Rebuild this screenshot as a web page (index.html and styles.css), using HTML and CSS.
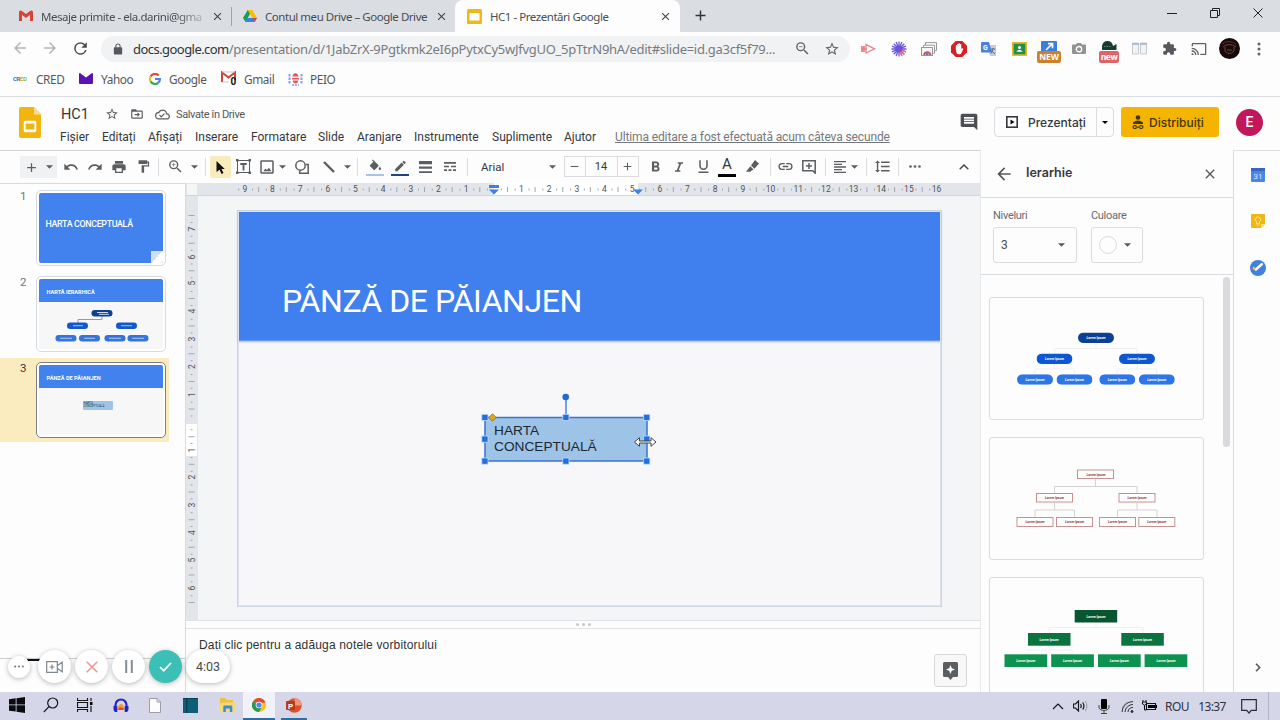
FILE: index.html
```html
<!DOCTYPE html>
<html lang="ro">
<head>
<meta charset="utf-8">
<title>HC1 - Prezentări Google</title>
<link rel="stylesheet" href="styles.css">
</head>
<body>
<svg class="defs" width="0" height="0">
  <symbol id="star" viewBox="0 0 24 24"><path d="M22 9.24l-7.19-.62L12 2 9.19 8.63 2 9.24l5.46 4.73L5.82 21 12 17.27 18.18 21l-1.63-7.03L22 9.24zM12 15.4l-3.76 2.27 1-4.28-3.32-2.88 4.38-.38L12 6.1l1.71 4.04 4.38.38-3.32 2.88 1 4.28L12 15.4z"/></symbol>
  <symbol id="back" viewBox="0 0 24 24"><path d="M20 11H7.83l5.59-5.59L12 4l-8 8 8 8 1.41-1.41L7.83 13H20v-2z"/></symbol>
  <symbol id="close" viewBox="0 0 24 24"><path d="M19 6.41L17.59 5 12 10.59 6.41 5 5 6.41 10.59 12 5 17.59 6.41 19 12 13.41 17.59 19 19 17.59 13.41 12z"/></symbol>
  <symbol id="plus" viewBox="0 0 24 24"><path d="M19 13h-6v6h-2v-6H5v-2h6V5h2v6h6z"/></symbol>
  <symbol id="down" viewBox="0 0 8 4"><path d="M0 0h8L4 4z"/></symbol>
  <symbol id="mag" viewBox="0 0 24 24"><path d="M15.5 14h-.79l-.28-.27A6.47 6.47 0 0 0 16 9.5 6.5 6.5 0 1 0 9.5 16c1.61 0 3.09-.59 4.23-1.57l.27.28v.79l5 4.99L20.49 19zM9.5 14a4.5 4.5 0 1 1 0-9 4.5 4.5 0 0 1 0 9z"/></symbol>
  <symbol id="pill" viewBox="0 0 36 11" preserveAspectRatio="none"><rect width="36" height="11" rx="5.5"/></symbol>
</svg>

<div class="tabs">
  <div class="tab tab-mail">
    <svg width="14" height="12" viewBox="0 0 14 12"><path d="M0 1.5V11h3V5l4 3 4-3v6h3V1.5Q12.500 0 11 1L7 4 3 1Q1.500 0 0 1.500z" fill="#d9443a"/></svg>
    <span class="tab-text fade">Mesaje primite - ela.darini@gma</span>
    <svg class="x" width="13" height="13"><use href="#close"/></svg>
  </div>
  <div class="tab tab-drive">
    <svg width="14" height="12" viewBox="0 0 14 12"><path d="M4.700 0h4.600L2.500 12 0 8z" fill="#1a9c57"/><path d="M4.700 0h4.600L14 8H9.300z" fill="#fbbc04"/><path d="M4.500 8H14l-2.400 4H2.300z" fill="#3c7de6"/><path d="M11 8h3l-2.400 4z" fill="#ea4335"/></svg>
    <span class="tab-text">Contul meu Drive – Google Drive</span>
    <svg class="x" width="13" height="13"><use href="#close"/></svg>
  </div>
  <div class="tab tab-active">
    <svg width="15" height="15" viewBox="0 0 15 15"><rect width="15" height="15" rx="1.500" fill="#efb71c"/><rect x="2.500" y="4" width="10" height="7.500" fill="#fff"/></svg>
    <span class="tab-text">HC1 - Prezentări Google</span>
    <svg class="x" width="13" height="13"><use href="#close"/></svg>
  </div>
  <svg class="newtab" width="17" height="17"><use href="#plus"/></svg>
  <div class="window-buttons">
    <svg width="10" height="10" viewBox="0 0 10 10"><path d="M0 5.500h10" class="ln"/></svg>
    <svg width="10" height="10" viewBox="0 0 10 10"><path d="M.5 2.500h7v7h-7zM2.500 2.500v-2h7v7h-2" class="ln"/></svg>
    <svg width="10" height="10" viewBox="0 0 10 10"><path d="M.5.5l9 9M9.500.5l-9 9" class="ln"/></svg>
  </div>
</div>

<div class="navbar">
  <div class="nav-buttons">
    <svg width="18" height="18" fill="#b4b5b8"><use href="#back"/></svg>
    <svg class="flip" width="18" height="18" fill="#b4b5b8"><use href="#back"/></svg>
    <svg width="19" height="19" viewBox="0 0 24 24" fill="#4b4e52"><path d="M17.650 6.350A7.950 7.950 0 0 0 12 4a8 8 0 1 0 7.730 10h-2.080A6 6 0 1 1 12 6c1.660 0 3.140.69 4.220 1.780L13 11h7V4z"/></svg>
  </div>
  <div class="omnibox">
    <svg width="12" height="12" viewBox="3 0 18 23" fill="#55585c"><path d="M18 8h-1V6c0-2.760-2.240-5-5-5S7 3.240 7 6v2H6c-1.100 0-2 .9-2 2v10c0 1.100.9 2 2 2h12c1.100 0 2-.9 2-2V10c0-1.100-.9-2-2-2zM9 6c0-1.660 1.340-3 3-3s3 1.340 3 3v2H9z"/></svg>
    <span class="url"><b>docs.google.com</b>/presentation/d/1JabZrX-9Pgtkmk2eI6pPytxCy5wJfvgUO_5pTtrN9hA/edit#slide=id.ga3cf5f79...</span>
    <svg class="omni-zoom" width="17" height="17" viewBox="0 0 24 24"><use href="#mag"/><path d="M7 9h5v1H7z"/></svg>
    <svg class="omni-star" width="16" height="16"><use href="#star"/></svg>
  </div>
  <div class="extensions">
    <div><svg width="16" height="14" viewBox="0 0 16 14"><path d="M0 4h4v6H0z" fill="#e98f90"/><path d="M5 2.500V11l8.500-4.200zM1 7h5" fill="none" stroke="#e98183" stroke-width="1.300"/></svg></div>
    <div><svg width="16" height="16" viewBox="-8 -8 16 16" stroke="#6a55d8" stroke-width="1.300"><path d="M0-7.500v15M-7.500 0h15M-5.300-5.300L5.300 5.300M5.300-5.300L-5.300 5.300M-2.900-7L2.900 7M2.900-7L-2.900 7M-7-2.900L7 2.900M-7 2.900L7-2.900"/><path d="M3 1l4 2M2 2.500l3.300 3.300M1 3l2 4" stroke="#ef6b85"/></svg></div>
    <div><svg width="16" height="14" viewBox="0 0 16 14" fill="none"><path d="M4.500 3V.6h11v8h-2M2.500 5V3.200h11v8h-2" stroke="#999"/><rect x=".5" y="5.500" width="11" height="8" fill="#f4f4f4" stroke="#999"/><path d="M3 13a3.300 3.300 0 0 1 6.500 0" stroke="#d9534a" stroke-width="2"/><circle cx="6.200" cy="12" r="1.500" fill="#4285f4"/></svg></div>
    <div><svg width="16" height="16" viewBox="0 0 16 16"><path d="M4.700 0h6.600L16 4.700v6.600L11.300 16H4.700L0 11.300V4.700z" fill="#d71f25"/><path d="M4.800 8V4.500q.7-.8 1.300 0V3.200q.7-.8 1.400 0V2.600q.7-.6 1.400 0v.7q.8-.6 1.400.2V8q1.600-1.300 2 0l-2.200 4.700q-3 1.300-4.500-.5z" fill="#fff"/></svg></div>
    <div><svg width="16" height="16" viewBox="0 0 16 16"><path d="M6 4h9v11H9z" fill="#c9cdd3"/><path d="M1 1h7l3 10.500H1Q0 11.500 0 10V2q0-1 1-1z" fill="#4c82d8"/><text x="2" y="9" class="gt">G</text><path d="M9.500 8h5M12 7v1q-.5 3-2 4.500M10 9.500l4 3.500" stroke="#54739b" fill="none"/></svg></div>
    <div><svg width="15" height="14" viewBox="0 0 15 14"><rect width="15" height="14" fill="#e3b92c"/><rect x="1.700" y="1.700" width="11.600" height="10.600" fill="#258e4d"/><circle cx="7.500" cy="5.500" r="1.500" fill="#fff"/><path d="M4.300 9.700q3.200-4 6.400 0z" fill="#fff"/></svg></div>
    <div class="badged"><svg width="16" height="14" viewBox="0 0 16 14"><rect width="16" height="14" rx="1" fill="#3b7edb"/><path d="M5 9l6-6M7 2.700h4.500v4.500" fill="none" stroke="#fff" stroke-width="1.700"/></svg><span class="badge badge-orange">NEW</span></div>
    <div><svg width="14" height="13" viewBox="0 0 14 13"><path d="M1 2.500h3L5 1h4l1 1.500h3q1 0 1 1V11q0 1-1 1H1q-1 0-1-1V3.500q0-1 1-1z" fill="#929292"/><circle cx="7" cy="7.200" r="2.700" fill="none" stroke="#fff" stroke-width="1.300"/></svg></div>
    <div class="badged"><svg width="16" height="14" viewBox="0 0 16 14"><path d="M1 9V5Q2 0 6.500 0T12 5l3.500-2v6z" fill="#173a31"/><path d="M3 5.500h7" stroke="#5c8076" stroke-dasharray="1.500 1"/></svg><span class="badge badge-red">new</span></div>
    <div><svg width="15" height="13" viewBox="0 0 15 13"><path d="M.5 1h6v11h-6zM8.500 1h6v11h-6z" fill="#f2f4f6" stroke="#c5cad0"/><path d="M0 2h7M8 2h7" stroke="#9fb4ca" stroke-width="1.500"/></svg></div>
    <div><svg width="15" height="15" viewBox="0 0 24 24" fill="#55585c"><path d="M20.500 11H19V7c0-1.100-.9-2-2-2h-4V3.500a2.500 2.500 0 0 0-5 0V5H4c-1.100 0-2 .9-2 2v3.800h1.500a2.700 2.700 0 0 1 0 5.400H2V20c0 1.100.9 2 2 2h3.800v-1.500a2.700 2.700 0 0 1 5.400 0V22H17c1.100 0 2-.9 2-2v-4h1.500a2.500 2.500 0 0 0 0-5z"/></svg></div>
    <div><svg width="16" height="16" viewBox="0 0 24 24" fill="#5f6368"><path d="M21 3H3c-1.100 0-2 .9-2 2v3h2V5h18v14h-7v2h7c1.100 0 2-.9 2-2V5c0-1.100-.9-2-2-2zM1 18v3h3c0-1.660-1.340-3-3-3zm0-4v2a5 5 0 0 1 5 5h2c0-3.870-3.130-7-7-7zm0-4v2a9 9 0 0 1 9 9h2c0-6.080-4.930-11-11-11z"/></svg></div>
    <div><svg width="21" height="21" viewBox="0 0 21 21"><circle cx="10.500" cy="10.500" r="10.500" fill="#17090c"/><path d="M4 9q6-5 13 0M6 9v4q4 5 9 0V9M8 12h5" stroke="#6b4a2b" fill="none"/><path d="M3 6q7-5 14 0" stroke="#6e1f3c" fill="none"/></svg></div>
    <div><svg width="4" height="14" viewBox="0 0 4 14" fill="#5f6368"><circle cx="2" cy="2" r="1.500"/><circle cx="2" cy="7" r="1.500"/><circle cx="2" cy="12" r="1.500"/></svg></div>
  </div>
</div>

<div class="bookmarks">
  <svg width="15" height="6" viewBox="0 0 15 6"><text y="5" class="cred"><tspan fill="#3f6cc8">CR</tspan><tspan fill="#e8a33b">E</tspan><tspan fill="#7fc455">D</tspan></text></svg>
  <span>CRED</span>
  <svg width="14" height="11" viewBox="0 0 14 11"><rect width="14" height="11" rx="1" fill="#5a12b5"/><path d="M1 0h12L7 4.500z" fill="#fff"/></svg>
  <span>Yahoo</span>
  <svg width="12" height="12" viewBox="0 0 12 12" fill="none" stroke-width="2.200"><path d="M9.600 2.500A5 5 0 0 0 1.600 3.600" stroke="#ea4335"/><path d="M1.600 3.600a5 5 0 0 0 0 4.800" stroke="#fbbc05"/><path d="M1.600 8.400a5 5 0 0 0 7.600 1.400" stroke="#34a853"/><path d="M9.200 9.800Q11 8 10.900 6H6" stroke="#4285f4"/></svg>
  <span>Google</span>
  <svg width="16" height="15" viewBox="0 0 16 15"><path d="M1 11V1.500l6.500 5 6.500-5V9" fill="none" stroke="#d2443c" stroke-width="2"/><path d="M1 1h13M1 11h7" stroke="#bbb" stroke-width=".8"/><text x="9.500" y="14" class="zero">0</text></svg>
  <span>Gmail</span>
  <svg width="15" height="14" viewBox="0 0 15 14"><path d="M1.500 2v10M13.500 2v10" stroke="#86a0e4" stroke-width="2" stroke-dasharray="2.500 1"/><path d="M4 13h7" stroke="#86a0e4" stroke-width="1.500" stroke-dasharray="2 1"/><path d="M4.500 3.500q3-5 6 0v1h-6zM4 6h7v1.500H4zM4.700 8.500h5.600Q10 11.500 7.500 11.500T4.700 8.500z" fill="#e2585c"/></svg>
  <span>PEIO</span>
</div>

<div class="docs">
  <svg class="logo" width="22" height="31" viewBox="0 0 22 31"><path d="M2 0h13l7 7.500V29q0 2-2 2H2q-2 0-2-2V2q0-2 2-2z" fill="#f2b40f"/><path d="M15 0l7 7.500h-7z" fill="#f8dc8b"/><rect x="5.700" y="14.700" width="10.600" height="9.600" rx=".8" fill="none" stroke="#fff" stroke-width="2"/><path d="M5 14h12v2.500H5zM5 22.500h12V25H5z" fill="#fff"/></svg>
  <div class="docs-main">
    <div class="title-row">
      <span class="doc-title">HC1</span>
      <svg width="14" height="14"><use href="#star"/></svg>
      <svg width="14" height="14" viewBox="0 0 24 24"><path fill-rule="evenodd" d="M20 6h-8l-2-2H4c-1.100 0-2 .9-2 2v12c0 1.100.9 2 2 2h16c1.100 0 2-.9 2-2V8c0-1.100-.9-2-2-2zm0 12H4V8h16z"/><path d="M13 9l4 4-4 4v-3H8v-2h5z"/></svg>
      <svg width="15" height="15" viewBox="0 0 24 24"><path fill-rule="evenodd" d="M19.350 10.040A7.490 7.490 0 0 0 12 4C9.110 4 6.600 5.640 5.350 8.040A5.994 5.994 0 0 0 0 14c0 3.310 2.690 6 6 6h13c2.760 0 5-2.240 5-5 0-2.640-2.050-4.780-4.650-4.960zM19 18H6a4 4 0 0 1 0-8h.71A5.500 5.500 0 0 1 17.500 11.500v.5H19a3 3 0 0 1 0 6z"/><path d="M10 14.200l-2.100-2.100-1.400 1.400 3.500 3.500 5.800-5.800-1.400-1.400z"/></svg>
      <span class="saved">Salvate în Drive</span>
    </div>
    <div class="menu">
      <span>Fișier</span><span>Editați</span><span>Afișați</span><span>Inserare</span><span>Formatare</span><span>Slide</span><span>Aranjare</span><span>Instrumente</span><span>Suplimente</span><span>Ajutor</span><span class="last-edit">Ultima editare a fost efectuată acum câteva secunde</span>
    </div>
  </div>
  <div class="docs-actions">
    <svg class="comment" width="20" height="20" viewBox="0 0 24 24"><path fill-rule="evenodd" d="M22 4c0-1.100-.9-2-2-2H4c-1.100 0-2 .9-2 2v12c0 1.100.9 2 2 2h14l4 4zM18 14H6v-2h12zm0-3H6V9h12zm0-3H6V6h12z"/></svg>
    <div class="present">
      <svg width="12" height="12" viewBox="0 0 12 12"><rect x=".8" y=".8" width="10.400" height="10.400" fill="none" stroke="#35383c" stroke-width="1.600"/><path d="M4.500 3.500v5l4-2.500z"/></svg>
      <span>Prezentați</span>
      <i><svg width="6" height="3"><use href="#down"/></svg></i>
    </div>
    <div class="share">
      <svg width="12" height="15" viewBox="0 0 12 15"><circle cx="6" cy="2.500" r="2.300"/><path d="M1 9V7.500Q6 3.500 11 7.500V9z"/><path d="M4.500 10.700h-2a1.300 1.300 0 0 0 0 2.800h2M7.500 10.700h2a1.300 1.300 0 0 1 0 2.800h-2M3.500 12.100h5" fill="none" stroke="#45360a" stroke-width="1.200"/></svg>
      <span>Distribuiți</span>
    </div>
    <div class="avatar">E</div>
  </div>
</div>

<div class="workspace">
  <div class="left">
    <div class="toolbar">
      <div class="shade"><svg width="15" height="15"><use href="#plus"/></svg></div>
      <div class="shade"><svg width="7" height="4"><use href="#down"/></svg></div>
      <div><svg width="16" height="16" viewBox="0 0 24 24"><path d="M12.500 8c-2.650 0-5.050.99-6.900 2.600L2 7v9h9l-3.620-3.620c1.390-1.160 3.160-1.880 5.120-1.880 3.540 0 6.550 2.310 7.600 5.500l2.370-.78C21.080 11.030 17.150 8 12.500 8z"/></svg></div>
      <div><svg width="16" height="16" viewBox="0 0 24 24"><path d="M18.400 10.600C16.550 8.990 14.150 8 11.500 8c-4.650 0-8.580 3.030-9.960 7.220L3.900 16c1.050-3.190 4.050-5.500 7.600-5.500 1.950 0 3.730.72 5.120 1.880L13 16h9V7z"/></svg></div>
      <div><svg width="16" height="16" viewBox="0 0 24 24"><path fill-rule="evenodd" d="M19 8H5c-1.660 0-3 1.340-3 3v6h4v4h12v-4h4v-6c0-1.660-1.340-3-3-3zm-3 11H8v-5h8v5zM18 3H6v4h12z"/></svg></div>
      <div><svg width="15" height="15" viewBox="0 0 24 24"><path d="M18 4V3c0-.55-.45-1-1-1H5c-.55 0-1 .45-1 1v4c0 .55.450 1 1 1h12c.55 0 1-.45 1-1V6h1v4H9v11c0 .55.450 1 1 1h2c.55 0 1-.45 1-1v-9h8V4z"/></svg></div>
      <div class="sep"></div>
      <div><svg width="17" height="17" viewBox="0 0 24 24"><use href="#mag"/><path d="M12 10h-2v2H9v-2H7V9h2V7h1v2h2z"/></svg></div>
      <div><svg width="7" height="4"><use href="#down"/></svg></div>
      <div class="sep"></div>
      <div class="selected"><svg width="9" height="13" viewBox="0 0 9 13"><path d="M.5 0l8.300 8H5.500l2 4-2 .9-1.900-4.100L.5 11z" fill="#111"/></svg></div>
      <div><svg width="15" height="15" viewBox="0 0 15 15"><path d="M1.500 1.500h12v12h-12z" fill="none" stroke="#5b5e61"/><path d="M0 0h2.500v2.500H0zM12.500 0H15v2.500h-2.500zM0 12.500h2.500V15H0zM12.500 12.500H15V15h-2.500z"/><path d="M4.300 5h6.400M7.500 5v6.500" stroke="#5b5e61" stroke-width="1.800"/></svg></div>
      <div><svg width="18" height="18" viewBox="0 0 24 24"><path fill-rule="evenodd" d="M19 5v14H5V5h14m0-2H5c-1.100 0-2 .9-2 2v14c0 1.100.9 2 2 2h14c1.100 0 2-.9 2-2V5c0-1.100-.9-2-2-2z"/><path d="M14.500 13l-2.500 3-2-2-3 3.500h11z"/></svg></div>
      <div><svg width="7" height="4"><use href="#down"/></svg></div>
      <div><svg width="14" height="14" viewBox="0 0 14 14" fill="none" stroke="#5b5e61" stroke-width="1.500"><circle cx="5.500" cy="5.500" r="4.700"/><path d="M11 4.500h2.200v8.700H4.700V11"/></svg></div>
      <div><svg width="12" height="12" viewBox="0 0 12 12"><path d="M1 1l10 10" stroke="#5b5e61" stroke-width="2.400"/></svg></div>
      <div><svg width="7" height="4"><use href="#down"/></svg></div>
      <div class="sep"></div>
      <div class="swatch light"><svg width="15" height="14" viewBox="0 0 24 21"><path d="M16.560 8.940L7.620 0 6.210 1.410l2.380 2.380-5.150 5.150a1.490 1.490 0 0 0 0 2.120l5.500 5.500c.29.29.68.44 1.060.44s.77-.15 1.060-.44l5.500-5.500c.59-.58.59-1.530 0-2.120zM19 11.500s-2 2.170-2 3.500a2 2 0 0 0 4 0c0-1.330-2-3.500-2-3.500z"/></svg></div>
      <div class="swatch navy"><svg width="15" height="14" viewBox="0 0 24 24"><path d="M3 17.250V21h3.750L17.810 9.940l-3.750-3.750L3 17.250zM20.710 7.040a1 1 0 0 0 0-1.410l-2.340-2.340a1 1 0 0 0-1.410 0l-1.830 1.830 3.750 3.750z"/></svg></div>
      <div><svg width="13" height="12" viewBox="0 0 13 12"><path d="M0 0h13v3.300H0zM0 5.500h13v2.300H0zM0 10.300h13V12H0z"/></svg></div>
      <div><svg width="12" height="9" viewBox="0 0 12 9"><path d="M0 0h12v1.700H0zM0 3.700h5v1.600H0zM7 3.700h5v1.600H7zM0 7.300h3V9H0zM4.500 7.300h3V9h-3zM9 7.300h3V9H9z"/></svg></div>
      <div class="sep"></div>
      <div class="font-name">Arial</div>
      <div><svg width="7" height="4"><use href="#down"/></svg></div>
      <div><div class="size-box"><b><svg width="13" height="13" viewBox="0 0 24 24"><path d="M5 11h14v2H5z"/></svg></b><span>14</span><b><svg width="13" height="13"><use href="#plus"/></svg></b></div></div>
      <div><svg width="17" height="17" viewBox="0 -1 24 24"><path fill-rule="evenodd" d="M15.600 10.790c.97-.67 1.650-1.770 1.650-2.790 0-2.260-1.750-4-4-4H7v14h7.040c2.090 0 3.710-1.700 3.710-3.790 0-1.520-.86-2.820-2.150-3.420zM10 6.500h3a1.500 1.500 0 0 1 0 3h-3zm3.500 9H10v-3h3.500a1.500 1.500 0 0 1 0 3z"/></svg></div>
      <div><svg width="16" height="16" viewBox="0 -1 24 24"><path d="M10 4v2.300h2.500l-3.700 9.400H6V18h8v-2.300h-2.500l3.700-9.400H18V4z"/></svg></div>
      <div><svg width="17" height="17" viewBox="0 0 24 24"><path d="M12 17a6 6 0 0 0 6-6V3h-2.200v8a3.800 3.800 0 0 1-7.600 0V3H6v8a6 6 0 0 0 6 6zM5 19v2h14v-2z"/></svg></div>
      <div class="swatch black"><span>A</span></div>
      <div><svg width="13" height="13" viewBox="0 0 13 13"><path d="M9 0l4 3.500-4.500 5.300L5 5.500zM4.300 6.300l3.300 3.200-1.900 1-1.300 1.200H0z"/></svg></div>
      <div class="sep"></div>
      <div><svg width="17" height="17" viewBox="0 0 24 24"><path d="M3.900 12c0-1.710 1.390-3.100 3.100-3.100h4V7H7a5 5 0 0 0 0 10h4v-1.900H7c-1.710 0-3.100-1.390-3.100-3.100zM8 13h8v-2H8zm9-6h-4v1.900h4a3.100 3.100 0 0 1 0 6.200h-4V17h4a5 5 0 0 0 0-10z"/></svg></div>
      <div><svg width="14" height="14" viewBox="0 0 14 14" fill="none" stroke="#5b5e61" stroke-width="1.500"><path d="M13.200 13.200V.8H.8v10h10zM7 3v6M4 6h6"/></svg></div>
      <div class="sep"></div>
      <div><svg width="16" height="16" viewBox="0 0 24 24"><path d="M15 15H3v2h12zm0-8H3v2h12zM3 13h18v-2H3zm0 8h18v-2H3zM3 3v2h18V3z"/></svg></div>
      <div><svg width="7" height="4"><use href="#down"/></svg></div>
      <div class="sep"></div>
      <div><svg width="17" height="17" viewBox="0 0 24 24"><path d="M6 7h2.500L5 3.500 1.500 7H4v10H1.500L5 20.500 8.500 17H6zm4-2v2h12V5zm0 14h12v-2H10zm0-6h12v-2H10z"/></svg></div>
      <div class="sep"></div>
      <div><svg width="12" height="3" viewBox="0 0 12 3"><circle cx="1.500" cy="1.500" r="1.300"/><circle cx="6" cy="1.500" r="1.300"/><circle cx="10.500" cy="1.500" r="1.300"/></svg></div>
      <div></div>
      <div><svg width="10" height="6" viewBox="0 0 10 6"><path d="M.7 5.300L5 1l4.300 4.300" fill="none" stroke="#4a4d50" stroke-width="1.500"/></svg></div>
    </div>

    <div class="edit-area">
      <div class="filmstrip">
        <div class="film-item"><span>1</span>
          <div class="thumb"><div class="mini mini-cover"><span>HARTA CONCEPTUALĂ</span></div></div></div>
        <div class="film-item"><span>2</span>
          <div class="thumb"><div class="mini"><div class="mini-head">HARTĂ IERARHICĂ</div>
            <svg width="125" height="47" viewBox="0 0 125 47"><path d="M63 14v3.500H39V21" fill="none" stroke="#9a9a9a"/><rect x="52.500" y="8" width="21" height="6.500" rx="3.200" fill="#0d408f"/><path d="M58 10.500h11M60 12.300h10" stroke="#dfe8ff" stroke-width=".9"/><g fill="#1259cf"><rect x="28" y="20.500" width="21" height="6.500" rx="3.200"/><rect x="77" y="20.500" width="21" height="6.500" rx="3.200"/></g><g fill="#3574dc"><rect x="16.500" y="33" width="21" height="6.500" rx="3.200"/><rect x="40" y="33" width="21" height="6.500" rx="3.200"/><rect x="65.500" y="33" width="21" height="6.500" rx="3.200"/><rect x="88.500" y="33" width="21" height="6.500" rx="3.200"/></g><path d="M34 23.700h10M82 23.700h11M21 36.300h12M45 36.300h11M70 36.300h12M93 36.300h12" stroke="#b9d0f8" stroke-width=".9"/></svg></div></div></div>
        <div class="film-item current"><span>3</span>
          <div class="thumb"><div class="mini"><div class="mini-head">PÂNZĂ DE PĂIANJEN</div><div class="mini-box">HARTA<br>CONCEPTUALĂ</div></div></div></div>
        <div class="film-foot"></div>
      </div>

      <div class="editor">
        <svg class="ruler-h" width="794" height="13" viewBox="186 183 794 13">
          <rect x="186" y="183" width="794" height="13" fill="#e2e5e9"/>
          <rect x="187" y="184" width="10" height="11" fill="#f4f6f6"/>
          <rect x="494" y="183" width="144" height="12" fill="#fff"/>
          <g stroke="#a4a8ad"><path d="M252.200 189.500h684" stroke-width="5" stroke-dasharray="0 5.900 1 20.750"/><path d="M238.300 189.500h698" stroke-width="2" stroke-dasharray="1 12.820"/></g>
          <g class="ruler-text"><text x="244.800" y="192">9</text><text x="272.500" y="192">8</text><text x="300.200" y="192">7</text><text x="327.900" y="192">6</text><text x="355.500" y="192">5</text><text x="383.200" y="192">4</text><text x="410.800" y="192">3</text><text x="438.500" y="192">2</text><text x="466.200" y="192">1</text><text x="521.500" y="192">1</text><text x="549.200" y="192">2</text><text x="576.900" y="192">3</text><text x="604.500" y="192">4</text><text x="632.200" y="192">5</text><text x="659.800" y="192">6</text><text x="687.500" y="192">7</text><text x="715.200" y="192">8</text><text x="742.900" y="192">9</text><text x="770.500" y="192">10</text><text x="798.200" y="192">11</text><text x="825.900" y="192">12</text><text x="853.500" y="192">13</text><text x="881.200" y="192">14</text><text x="908.900" y="192">15</text><text x="936.500" y="192">16</text></g>
          <path d="M489 185h10v3h-10zM489 189.500h10l-5 5zM633 189.500h10l-5 5z" fill="#3f7fe8"/>
          <path d="M186 195.500h794" stroke="#d3d6d9"/>
        </svg>
        <div class="canvas-row">
          <svg class="ruler-v" width="12" height="425" viewBox="186 196 12 425">
            <rect x="186" y="195" width="12" height="427" fill="#e2e5e9"/>
            <rect x="186" y="424" width="11" height="32" fill="#fff"/>
            <path d="M191.500 215v392" stroke="#a4a8ad" stroke-width="6" stroke-dasharray="1 26.650"/>
            <path d="M191.500 222v386" stroke="#a4a8ad" stroke-width="2" stroke-dasharray="1 12.820"/>
            <g class="ruler-text"><text transform="translate(194.500 229) rotate(-90)">7</text><text transform="translate(194.500 257) rotate(-90)">6</text><text transform="translate(194.500 283) rotate(-90)">5</text><text transform="translate(194.500 311) rotate(-90)">4</text><text transform="translate(194.500 339) rotate(-90)">3</text><text transform="translate(194.500 366.500) rotate(-90)">2</text><text transform="translate(194.500 394.500) rotate(-90)">1</text><text transform="translate(194.500 450) rotate(-90)">1</text><text transform="translate(194.500 477) rotate(-90)">2</text><text transform="translate(194.500 505) rotate(-90)">3</text><text transform="translate(194.500 532.500) rotate(-90)">4</text><text transform="translate(194.500 560) rotate(-90)">5</text><text transform="translate(194.500 588) rotate(-90)">6</text></g>
          </svg>
          <div class="canvas">
            <div class="slide">
              <div class="slide-head">PÂNZĂ DE PĂIANJEN</div>
              <div class="shape">HARTA<br>CONCEPTUALĂ</div>
              <svg class="handles" width="180" height="80" viewBox="480 390 180 80">
                <path d="M566 397v20" stroke="#4a82dc" stroke-width="1.500"/><circle cx="565.700" cy="397" r="3.300" fill="#1f6ad2"/>
                <path d="M485 417.500h162v43.500H485z" fill="none" stroke="#3b71d3" stroke-width="1.500"/>
                <g fill="#1f6fdf" stroke="#c5dbf7" stroke-width=".8"><rect x="481.800" y="414.300" width="6.200" height="6.200"/><rect x="562.800" y="414.300" width="6.200" height="6.200"/><rect x="643.700" y="414.300" width="6.200" height="6.200"/><rect x="481.800" y="436" width="6.200" height="6.200"/><rect x="643.700" y="436" width="6.200" height="6.200"/><rect x="481.800" y="458" width="6.200" height="6.200"/><rect x="562.800" y="458" width="6.200" height="6.200"/><rect x="643.700" y="458" width="6.200" height="6.200"/></g>
                <path d="M492.500 413.800l3.700 3.700-3.700 3.700-3.700-3.700z" fill="#e0a817" stroke="#8a6a1c" stroke-width=".8"/>
                <path d="M634.500 442l5-4.300v3.300h11.500v-3.300l5 4.300-5 4.300v-3.300h-11.500v3.300z" fill="#fff" stroke="#444" stroke-width="1"/>
              </svg>
            </div>
          </div>
        </div>
        <div class="split"><i></i><i></i><i></i></div>
        <div class="notes">
          <span>Dați clic pentru a adăuga notele vorbitorului</span>
          <div class="explore"><svg width="15" height="18" viewBox="0 0 15 18"><path d="M1.500 0h12Q15 0 15 1.500v12Q15 15 13.500 15H10l-2.500 3L5 15H1.500Q0 15 0 13.500v-12Q0 0 1.500 0z" fill="#5c5f62"/><path d="M7.500 3l1.300 3.200L12 7.500 8.800 8.800 7.500 12 6.200 8.800 3 7.500l3.200-1.300z" fill="#fff"/></svg></div>
        </div>
      </div>
    </div>
  </div>

  <div class="panel">
    <div class="panel-head"><svg width="20" height="20"><use href="#back"/></svg><span>Ierarhie</span><svg width="16" height="16"><use href="#close"/></svg></div>
    <div class="panel-filters">
      <label>Niveluri<div class="select sel-levels">3<svg width="7" height="4"><use href="#down"/></svg></div></label>
      <label>Culoare<div class="select sel-color"><i></i><svg width="7" height="4"><use href="#down"/></svg></div></label>
    </div>
    <div class="cards">
      <div class="card"><svg width="213" height="121" viewBox="990 298 213 121">
        <path d="M1096 343v6M1054.500 354v-5.500h82.500v5.500M1054.500 363v6M1035 374v-5h39.500v5M1137 363v6M1117 374v-5h39.500v5" class="faint"/>
        <g fill="#0c4093"><use href="#pill" x="1078" y="332.500" width="36" height="10.500"/></g>
        <g fill="#0c57d3"><use href="#pill" x="1036.500" y="353.500" width="36" height="10.500"/><use href="#pill" x="1119" y="353.500" width="36" height="10.500"/></g>
        <g fill="#2d76e8"><use href="#pill" x="1017" y="374.300" width="36" height="10.500"/><use href="#pill" x="1056.500" y="374.300" width="36" height="10.500"/><use href="#pill" x="1099.300" y="374.300" width="36" height="10.500"/><use href="#pill" x="1138.800" y="374.300" width="36" height="10.500"/></g>
        <g class="lorem" fill="#fff"><text x="1096" y="339">Lorem Ipsum</text><text x="1054.500" y="360">Lorem Ipsum</text><text x="1137" y="360">Lorem Ipsum</text><text x="1035" y="381">Lorem Ipsum</text><text x="1074.500" y="381">Lorem Ipsum</text><text x="1117.300" y="381">Lorem Ipsum</text><text x="1156.800" y="381">Lorem Ipsum</text></g>
      </svg></div>
      <div class="card"><svg width="213" height="121" viewBox="990 438 213 121">
        <path d="M1095.500 479v7.500M1054.500 493v-6.500h82.500v6.500M1054.500 502.500v7.500M1035 517v-7h39.500v7M1137 502.500v7.500M1117.500 517v-7h39.500v7" fill="none" stroke="#d3d3d5"/>
        <g fill="#fff" stroke="#c99092"><rect x="1077.500" y="470" width="36" height="8.500"/><rect x="1036.500" y="493.500" width="36" height="8.500"/><rect x="1119" y="493.500" width="36" height="8.500"/><rect x="1017" y="517.500" width="36" height="9"/><rect x="1056.500" y="517.500" width="36" height="9"/><rect x="1099.500" y="517.500" width="36" height="9"/><rect x="1138.800" y="517.500" width="36" height="9"/></g>
        <g class="lorem" fill="#8e3a38"><text x="1096" y="475.500">Lorem Ipsum</text><text x="1054.500" y="499">Lorem Ipsum</text><text x="1137" y="499">Lorem Ipsum</text><text x="1035" y="523.300">Lorem Ipsum</text><text x="1074.500" y="523.300">Lorem Ipsum</text><text x="1117.500" y="523.300">Lorem Ipsum</text><text x="1156.800" y="523.300">Lorem Ipsum</text></g>
      </svg></div>
      <div class="card"><svg width="213" height="121" viewBox="990 578 213 121">
        <path d="M1096 622v6M1049 633v-5.500h94v5.500M1049 646v4M1072 654v-4h-46M1142 646v4" class="faint"/>
        <rect x="1074.700" y="610" width="42.500" height="12.500" fill="#08552f"/>
        <g fill="#0b733f"><rect x="1028" y="633" width="42.500" height="12.700"/><rect x="1121.300" y="633" width="42.500" height="12.700"/></g>
        <g fill="#0d934f"><rect x="1004.500" y="654.300" width="42.700" height="12.700"/><rect x="1051.200" y="654.300" width="42.700" height="12.700"/><rect x="1098" y="654.300" width="42.700" height="12.700"/><rect x="1144.600" y="654.300" width="42.700" height="12.700"/></g>
        <g class="lorem" fill="#fff"><text x="1096" y="617.500">Lorem Ipsum</text><text x="1049" y="640.500">Lorem Ipsum</text><text x="1142.500" y="640.500">Lorem Ipsum</text><text x="1025.800" y="662">Lorem Ipsum</text><text x="1072.500" y="662">Lorem Ipsum</text><text x="1119.300" y="662">Lorem Ipsum</text><text x="1166" y="662">Lorem Ipsum</text></g>
      </svg></div>
      <div class="scrollbar"></div>
    </div>
  </div>

  <div class="rail">
    <svg width="14" height="14" viewBox="0 0 14 14"><rect width="14" height="14" rx="1" fill="#4a86e8"/><path d="M0 0h14v3H0z" fill="#3765c0"/><text x="7" y="11" class="cal">31</text></svg>
    <svg width="14" height="14" viewBox="0 0 14 14"><path d="M1 0h12q1 0 1 1v9l-4 4H1q-1 0-1-1V1q0-1 1-1z" fill="#f2b613"/><path d="M14 10l-4 4v-4z" fill="#fadb85"/><path d="M5.500 9.500V7.700a2.600 2.600 0 1 1 3 0v1.800zM5.500 11h3" fill="none" stroke="#fbe6a5"/></svg>
    <svg width="16" height="16" viewBox="0 0 16 16"><circle cx="8" cy="8" r="8" fill="#4080e0"/><path d="M5.800 9.500l6-5.300" stroke="#fff" stroke-width="2.500" stroke-linecap="round"/><circle cx="4" cy="8.300" r="1.500" fill="#f0bf2b"/></svg>
    <svg class="rail-chevron" width="6" height="9" viewBox="0 0 6 9"><path d="M1 .8l3.700 3.700L1 8.200" fill="none" stroke="#55585c" stroke-width="1.600"/></svg>
  </div>
</div>

<div class="taskbar">
  <div class="apps">
    <div><svg width="16" height="16" viewBox="0 0 16 16"><path d="M0 2.300L6.700 1.300v6.200H0zM7.500 1.200L16 0v7.500H7.500zM0 8.300h6.700v6.300L0 13.700zM7.500 8.300H16V16l-8.500-1.200z" fill="#0c0c0e"/></svg></div>
    <div><svg width="16" height="16" viewBox="0 0 16 16"><circle cx="9.700" cy="6" r="5" class="ln2"/><path d="M6 9.700L.8 15" class="ln2"/></svg></div>
    <div><svg width="16" height="14" viewBox="0 0 16 14"><path d="M.5 0v2.500h10V0M.5 4.500h10v5H.5zM.5 14v-2.500h10V14M14 0v3M14 8v6" class="ln2"/><path d="M13 4h2.500v3H13z"/></svg></div>
    <div><svg width="16" height="15" viewBox="0 0 16 15"><path d="M2.500 9V7a5.500 5.500 0 0 1 11 0v2" fill="none" stroke="#2424c9" stroke-width="2.200"/><path d="M4 12l2-5 2-1.500L10 7l2 5z" fill="#f59b1d"/><path d="M5 11l2-2 2 1 2 0-1 2H6z" fill="#e34c1e"/><path d="M.5 8h3.800v6H2Q.5 13 .5 11zM11.700 8h3.800v3q0 2-1.500 3h-2.300z" fill="#2424c9"/></svg></div>
    <div><svg width="12" height="15" viewBox="0 0 12 15"><path d="M.5.5h7.500l3.500 3.500v10.500H.5z" fill="#fdfdfd" stroke="#9d9da6"/><path d="M8 .5V4h3.500" fill="none" stroke="#9d9da6"/></svg></div>
    <div><svg width="15" height="15" viewBox="0 0 15 15"><rect width="15" height="15" fill="#0d5f78"/><path d="M0 0h15v1H0zM3 0h1.300v15H3z" fill="#0a3f52"/></svg></div>
    <div><svg width="15" height="14" viewBox="0 0 15 14"><path d="M0 1q0-1 1-1h4l1.500 2H13v11H0z" fill="#f1bf3e"/><path d="M1.500 4.500H15V13H0V6z" fill="#f8d775"/><path d="M3.300 14V8.500q0-1 1-1h7q1 0 1 1V14H9.800v-3.500h-4V14z" fill="#3b8fcf"/></svg></div>
    <div class="open lit"><svg width="14" height="14" viewBox="0 0 14 14"><circle cx="7" cy="7" r="7" fill="#fbc116"/><path d="M7 7L1 3.500A7 7 0 0 1 13 3.500z" fill="#dd4b3c"/><path d="M.9 3.500A7 7 0 0 0 7 14l2.500-4.300L7 7z" fill="#239b56"/><path d="M7 3.500h6.100v1H7z" fill="#dd4b3c"/><circle cx="7" cy="7" r="3.300" fill="#fff"/><circle cx="7" cy="7" r="2.600" fill="#4688ef"/></svg></div>
    <div class="open ppt"><svg width="16" height="15" viewBox="0 0 16 15"><circle cx="8.500" cy="7.500" r="7.300" fill="#d9532f"/><path d="M8.500.2a7.300 7.300 0 0 1 7.300 7.300H8.500z" fill="#f29479"/><rect y="3" width="9" height="9" rx="1" fill="#b83a1c"/><text x="2" y="10.500" class="pp">P</text></svg></div>
  </div>
  <div class="tray">
    <svg width="12" height="7" viewBox="0 0 12 7"><path d="M1 6l5-5 5 5" class="ln2"/></svg>
    <svg width="15" height="12" viewBox="0 0 15 12"><path d="M.5 4h2L5.500 1v10l-3-3h-2zM7.500 4q1.500 2 0 4M9.700 2.500q2.500 3.500 0 7" class="ln2"/><path d="M12.200 1q3.500 5 0 10" fill="none" stroke="#999ba8"/></svg>
    <svg width="12" height="15" viewBox="0 0 12 15"><rect x="3" width="6" height="10" rx="1"/><path d="M1 6v3q1 2.500 5 2.500T11 9V6M6 11v4M3 14.500h6" fill="none" stroke="#444"/></svg>
    <svg width="13" height="13" viewBox="0 0 13 13" fill="none" stroke="#333"><path d="M1 12A11 11 0 0 1 12 1.500M4 12a8 8 0 0 1 8-7.500M7 12a5 5 0 0 1 5-4.500"/><path d="M1 8a14 14 0 0 1 6-6" stroke="#888"/><circle cx="11" cy="11.500" r="1" fill="#111"/></svg>
    <svg width="15" height="12" viewBox="0 0 15 12"><path d="M4.500 3.500h9v6h-9z" class="ln2"/><path d="M6 5h7v3H6zM14 5h1v3h-1z"/><path d="M1 0v2M4 0v2M.5 2h4v2q-2 2.500-4 0zM2.500 5v5h2" fill="none" stroke="#111"/></svg>
    <span>ROU</span>
    <span>13:37</span>
    <svg width="16" height="15" viewBox="0 0 16 15"><path d="M.7.700h14.600v10.600h-5L8 14l-2.300-2.700h-5z" fill="none" stroke="#2b2b33" stroke-width="1.200"/></svg>
    <i></i>
  </div>
</div>

<div class="recorder">
  <div class="rec-mark"></div>
  <div class="rec small"><svg width="10" height="3" viewBox="0 0 10 3" fill="#6d747c"><circle cx="1.200" cy="1.500" r="1"/><circle cx="5" cy="1.500" r="1"/><circle cx="8.800" cy="1.500" r="1"/></svg></div>
  <div class="rec"><svg width="17" height="12" viewBox="0 0 17 12" fill="none" stroke="#7f8890" stroke-width="1.200"><path d="M.7.700h10.600v10.600H.7zM11.500 4.500l4.700-3.300v9.600l-4.700-3.300M3.500 6h5M6 3.500v5"/></svg></div>
  <div class="rec"><svg width="12" height="12" viewBox="0 0 12 12"><path d="M.7.700l10.600 10.600M11.300.7L.7 11.300" stroke="#f0958d" stroke-width="1.500"/></svg></div>
  <div class="rec"><svg width="8" height="13" viewBox="0 0 8 13"><path d="M1.200 0v13M6.800 0v13" stroke="#848e96" stroke-width="2"/></svg></div>
  <div class="rec teal"><svg width="13" height="10" viewBox="0 0 13 10"><path d="M1 5l3.700 3.700L12 1" fill="none" stroke="#fff" stroke-width="1.700"/></svg></div>
  <div class="rec time">4:03</div>
</div>
</body>
</html>
```
FILE: styles.css
```css
* { box-sizing: border-box; }
body { margin: 0; width: 1280px; height: 720px; overflow: hidden; display: flex; flex-direction: column; background: #fdfdfd; font-family: Roboto, "Liberation Sans", sans-serif; color: #35383c; position: relative; }
svg { display: block; flex: none; }
.defs { position: absolute; }
span { white-space: nowrap; }
.ln { fill: none; stroke: #222; stroke-width: 1; }
.ln2 { fill: none; stroke: #15151a; stroke-width: 1.2; }

.tabs { height: 32px; flex: none; display: flex; background: #dadde2; font-family: "Noto Sans", sans-serif; font-size: 11.5px; }
.tab { display: flex; align-items: center; position: relative; color: #4a4d52; }
.tab-text { flex: 1; margin-left: 8px; letter-spacing: -.46px; }
.fade { -webkit-mask-image: linear-gradient(90deg, #000 80%, transparent); }
.x { fill: #3f4246; }
.tab-mail { width: 232px; padding: 0 8px 0 19px; }
.tab-mail::after { content: ""; width: 1px; height: 19px; background: #a0a3a8; position: absolute; right: 0; top: 7px; }
.tab-drive { width: 223px; padding: 0 7px 0 11px; }
.tab-active { width: 225px; padding: 0 8px 0 12px; background: #fdfdfd; border-radius: 8px 8px 0 0; }
.newtab { margin: 7px 0 0 12px; fill: #303236; }
.window-buttons { margin-left: auto; display: flex; gap: 33px; padding: 8px 17px 0 0; }

.navbar { height: 33px; flex: none; display: flex; align-items: center; }
.nav-buttons { width: 101px; display: flex; gap: 12px; padding-left: 11px; }
.flip { transform: scaleX(-1); }
.omnibox { width: 749px; height: 26px; border-radius: 13px; background: #f0f2f3; display: flex; align-items: center; padding-left: 11px; fill: #5f6368; font-family: "Noto Sans", sans-serif; }
.url { width: 653px; margin-left: 9px; color: #777b80; font-size: 13px; letter-spacing: -.28px; }
.url b { font-weight: 400; color: #303338; letter-spacing: -.55px; }
.omni-zoom { margin-left: 8px; }
.omni-star { margin-left: 13px; }
.extensions { display: flex; padding-left: 4px; }
.extensions div { width: 30px; height: 32px; display: flex; align-items: center; justify-content: center; position: relative; }
.badge { position: absolute; bottom: 2px; height: 12px; border-radius: 2px; color: #fff; font: bold 8.5px/12px "Open Sans", sans-serif; letter-spacing: -.1px; padding: 0 2px; }
.badge-orange { background: #cd7f2e; }
.badge-red { background: #df6467; letter-spacing: -.4px; }
.badged svg { margin-bottom: 2px; }
.gt { font: bold 7px Roboto; fill: #fff; }

.bookmarks { height: 32px; flex: none; border-bottom: 1px solid #dcdfe1; display: grid; align-items: center; grid-template-columns: 23px 43px 22px 48px 20px 52px 23px 44px 22px 60px; padding: 0 0 4px 13px; font: 11.8px "Noto Sans", sans-serif; letter-spacing: -.38px; color: #55585d; }
.cred { font: bold 6px Roboto; }
.zero { font: bold 10px Roboto; fill: #111; }

.docs { height: 53px; flex: none; display: flex; padding-left: 19px; }
.logo { margin-top: 10px; }
.docs-main { padding: 7px 0 0 19px; }
.title-row { height: 20px; display: flex; align-items: center; fill: #5b5e62; }
.doc-title { width: 45px; font-size: 14.5px; padding-left: 1px; }
.title-row svg + svg { margin-left: 11px; }
.saved { margin-left: 6px; font-size: 11px; letter-spacing: -.38px; color: #55585c; }
.menu { display: grid; grid-template-columns: 42px 46px 47px 56px 67px 39px 57px 78px 72px 51px 300px; padding-top: 4.5px; font-size: 12px; line-height: 16px; }
.last-edit { color: #75787c; text-decoration: underline; letter-spacing: -.12px; }
.docs-actions { margin-left: auto; display: flex; align-items: center; padding-right: 17px; height: 50px; }
.comment { fill: #4b4f53; margin-right: 15px; }
.present { width: 120px; height: 30px; border: 1px solid #dadce0; border-radius: 4px; display: flex; align-items: center; padding-left: 11px; font: 500 12px Inter, sans-serif; }
.present span { flex: 1; margin-left: 10px; }
.present i { width: 17px; height: 28px; border-left: 1px solid #dadce0; display: flex; align-items: center; justify-content: center; }
.share { width: 98px; height: 30px; margin-left: 7px; border-radius: 3px; background: #f5b400; display: flex; align-items: center; gap: 5px; padding-left: 11px; font: 500 12px Inter, sans-serif; color: #45360a; fill: #45360a; }
.avatar { width: 27px; height: 27px; margin-left: 17px; border-radius: 50%; background: #c2185b; color: #fff; font-size: 14px; font-weight: 500; line-height: 27px; text-align: center; }

.workspace { height: 542px; flex: none; display: flex; }
.left { width: 980px; display: flex; flex-direction: column; border-top: 1px solid #cfd1d3; }
.toolbar { height: 32px; flex: none; padding: 0 0 1px 20px; display: grid; grid-template-columns: 22px 16px 25px 24px 24px 24px 7px 26px 12px 10px 21px 25px 22px 9px 29px 25px 12px 9px 26px 24px 26px 24px 10px 72px 16px 82px 27px 20px 28px 20px 31px 5px 24px 24px 8px 21px 9px 14px 18px 15px 17px 25px 32px; fill: #5b5e61; font-size: 11.5px; }
.toolbar > div { display: flex; align-items: center; justify-content: center; }
.toolbar > .sep::before { content: ""; width: 1px; height: 18px; background: #dadce0; }
.toolbar > .shade { background: #f0f1f2; margin: 5px 0 4px; }
.toolbar > .shade + .shade { margin-right: 1px; }
.toolbar > .selected { background: #faebbb; margin: 5px 0 4px; border-radius: 2px; }
.toolbar > .swatch { flex-direction: column; justify-content: flex-start; padding-top: 8px; }
.swatch::after { content: ""; width: 18px; height: 2px; flex: none; background: #a9c1e4; margin-top: 1px; }
.navy::after { background: #1f4581; }
.toolbar > .black { padding-top: 5px; }
.black span { font-size: 15px; height: 16px; line-height: 17px; }
.black::after { background: #000; height: 3px; margin-top: 2px; }
.toolbar > .font-name { justify-content: flex-start; padding-left: 9px; }
.size-box { width: 75px; height: 21px; border: 1px solid #dadce0; display: flex; }
.size-box b { width: 20px; display: flex; align-items: center; justify-content: center; }
.size-box span { flex: 1; border: solid #dadce0; border-width: 0 1px; line-height: 20px; text-align: center; font-size: 11px; }

.edit-area { flex: 1; display: flex; min-height: 0; }
.filmstrip { width: 186px; border-top: 1px solid #d8dadc; border-right: 1px solid #d8dadc; display: flex; flex-direction: column; padding-top: 2px; }
.film-item { width: 169px; height: 83px; margin-bottom: 3px; padding: 4px 0 0 20px; display: flex; color: #707479; font-size: 11.5px; line-height: 12px; flex: none; }
.film-item > span { width: 15.5px; }
.current { background: #faecbf; color: #35383c; }
.film-item.current { height: 84px; }
.thumb { width: 130.5px; height: 76px; border: 1.5px solid #d3dbe4; border-radius: 5px; padding: 1.5px 2px; background: #fff; }
.current .thumb { border-color: #7b7f87; }
.mini { height: 70px; background: #f7f7f8; border-radius: 2px; overflow: hidden; position: relative; }
.mini-head { height: 23px; background: #4182ef; color: #fff; font-size: 5.6px; font-weight: 700; line-height: 26px; padding-left: 8px; white-space: nowrap; }
.mini-cover { background: #4182ef; color: #fff; padding: 24px 0 0 7px; font-size: 8.8px; letter-spacing: -.3px; line-height: 14px; font-weight: 500; }
.mini-cover::after { content: ""; position: absolute; right: 0; bottom: 0; width: 12px; height: 12px; background: linear-gradient(135deg, #cfdff8 50%, #fff 50%); }
.mini-box { width: 30px; height: 9px; margin: 13px 0 0 44px; background: #9ec3e6; border-radius: 1px; font-size: 3px; line-height: 3.5px; padding: 1px; color: #244; }
.film-foot { margin-top: auto; height: 34px; border-top: 1px solid #cdd0d3; }

.editor { width: 794px; display: flex; flex-direction: column; }
.ruler-text { font: 8.5px Roboto; fill: #505357; text-anchor: middle; }
.canvas-row { height: 424px; flex: none; display: flex; overflow: hidden; }
.canvas { flex: 1; background: #f3f5f6; padding: 14px 0 0 39px; }
.slide { width: 705px; height: 397px; border: 1px solid #cfd5df; outline: 1px solid #dde2ec; outline-offset: -2px; background: #f7f7f9; position: relative; }
.slide-head { height: 130px; background: #4080ee; border-bottom: 1px solid #6b99e7; box-shadow: 0 1px 2px #aab6ca; color: #fff; font-size: 32px; letter-spacing: -.44px; line-height: 36px; padding: 72px 0 0 44px; white-space: nowrap; }
.shape { position: absolute; left: 247px; top: 206px; width: 162px; height: 44px; background: #9dc3e6; color: #1c2733; font: 13.7px/16px "Liberation Sans", Arial, sans-serif; padding: 6px 0 0 9px; }
.handles { position: absolute; left: 242px; top: 179px; }
.split { height: 9px; flex: none; border: solid #e0e2e4; border-width: 1px 0; display: flex; gap: 3px; align-items: center; justify-content: center; }
.split i { width: 3px; height: 3px; border-radius: 50%; background: #c6c9cc; }
.notes { flex: 1; display: flex; justify-content: space-between; padding: 8px 13px 0 13px; font: 12px/16px "Liberation Sans", Arial, sans-serif; letter-spacing: .16px; color: #303236; }
.explore { width: 33px; height: 33px; margin-top: 17px; border: 1px solid #d6d8da; border-radius: 3px; background: #f8f8f8; display: flex; align-items: center; justify-content: center; }

.panel { width: 253px; border-left: 1px solid #e6e8ea; display: flex; flex-direction: column; overflow: hidden; }
.panel-head { height: 48px; flex: none; border-bottom: 1px solid #dadce0; display: flex; align-items: center; padding: 0 15px 0 13px; fill: #55585c; }
.panel-head span { flex: 1; margin-left: 12px; font: 600 12.5px Inter, sans-serif; padding-bottom: 2px; }
.panel-filters { height: 77px; flex: none; border-bottom: 1px solid #dadce0; display: flex; gap: 14px; padding: 11px 12px; font-size: 11px; letter-spacing: -.3px; color: #66696e; }
.select { height: 36px; margin-top: 5px; border: 1px solid #dadce0; border-radius: 3px; display: flex; align-items: center; justify-content: space-between; padding: 0 11px 0 7px; fill: #55585c; font-size: 12px; color: #4a4d52; }
.sel-levels { width: 84px; }
.sel-color { width: 52px; }
.sel-color i { width: 18px; height: 18px; border: 1px solid #dadce0; border-radius: 50%; }
.cards { flex: 1; position: relative; padding: 22px 0 0 8px; display: flex; flex-direction: column; gap: 17px; overflow: hidden; }
.card { width: 215px; height: 123px; flex: none; border: 1px solid #dadce0; border-radius: 3px; }
.scrollbar { position: absolute; right: 3px; top: 2px; width: 7px; height: 170px; border-radius: 4px; background: #d8dadd; }
.lorem { font: italic 700 3.3px Roboto; text-anchor: middle; }
.faint { fill: none; stroke: #eef0f1; }

.rail { width: 47px; border-left: 1px solid #dadce0; border-top: 1px solid #dfe1e3; display: flex; flex-direction: column; align-items: center; padding: 17px 0 20px 1px; gap: 32px; }
.rail-chevron { margin-top: auto; }
.cal { font: 8px Roboto; fill: #dce8ff; text-anchor: middle; }

.taskbar { height: 28px; flex: none; background: #d5d7e9; display: flex; justify-content: space-between; }
.apps { display: grid; grid-template-columns: 34px 34px 33px 40px 28px 42px 32px 32px 38px; }
.apps div { display: flex; align-items: center; justify-content: center; border-bottom: 2px solid transparent; }
.apps .open { border-bottom-color: #2e6da6; }
.apps .lit { background: #f1f2f9; }
.apps .ppt { margin: 0 6px; }
.pp { font: bold 8px Roboto; fill: #fff; }
.tray { display: grid; grid-template-columns: 22px 22px 25px 22px 23px 32px 38px 35px 5px; align-items: center; justify-items: center; width: 233px; font: 12px "Noto Sans", sans-serif; letter-spacing: -.6px; color: #303038; }
.tray i { width: 1px; height: 28px; background: #b3b5c6; }

.recorder { position: absolute; left: 8px; top: 650px; display: flex; align-items: center; gap: 4px; }
.rec { width: 33px; height: 33px; border-radius: 17px; background: #fff; box-shadow: 0 1px 5px rgba(0, 0, 0, .28); display: flex; align-items: center; justify-content: center; position: relative; }
.rec-mark { position: absolute; left: 19px; top: 9px; width: 13px; height: 21px; border-top: 2px solid #111; }
.rec.small { width: 22px; height: 22px; margin-right: 4px; }
.rec.teal { background: #3cbfb7; }
.rec.time { width: 44px; font-size: 12.5px; color: #45484c; }
```
